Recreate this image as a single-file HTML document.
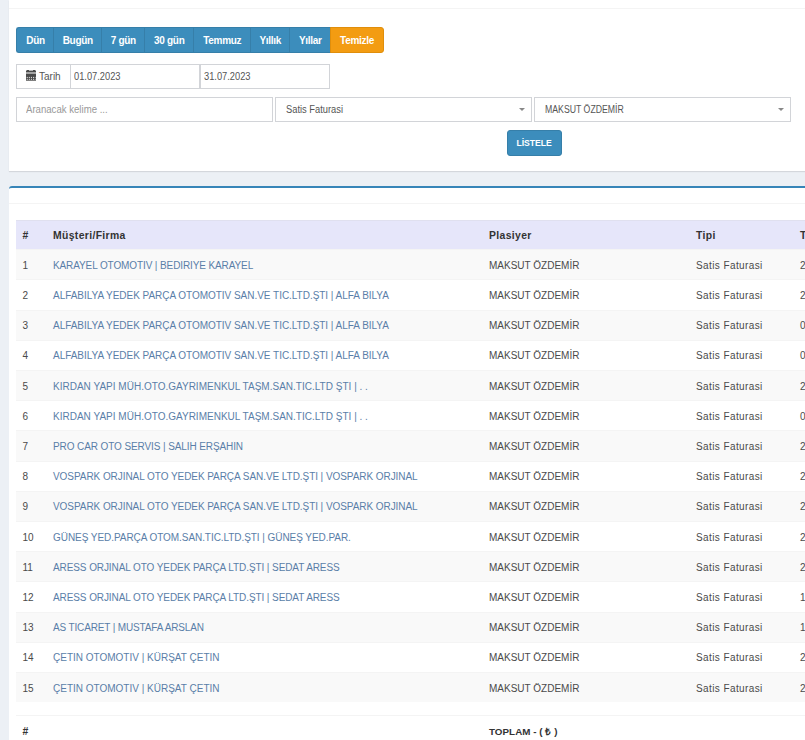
<!DOCTYPE html>
<html><head><meta charset="utf-8">
<style>
*{box-sizing:border-box;margin:0;padding:0}
html,body{width:805px;height:740px;overflow:hidden;background:#ecf0f5;font-family:"Liberation Sans",sans-serif;color:#333}
.abs{position:absolute}
.panel1{left:9px;top:0;width:800px;height:171px;background:#fff;box-shadow:0 1px 1px rgba(0,0,0,0.1)}
.panel1 .hline{left:0;top:8px;width:800px;height:1px;background:#f4f4f4}
.btng{top:27px;height:26px;left:16px}
.btn{position:absolute;top:27px;height:26px;background:#3c8dbc;color:#fff;font-weight:bold;font-size:10px;letter-spacing:-0.3px;line-height:25px;text-align:center;border:1px solid #367fa9;border-right:none}
.btn.first{border-radius:3px 0 0 3px}
.btn.warn{background:#f39c12;border:1px solid #e08e0b;border-radius:0 3px 3px 0}
.inp{position:absolute;background:#fff;border:1px solid #d2d4d8;font-size:10px;color:#555;line-height:23px;white-space:nowrap}
.sx{display:inline-block;transform-origin:0 50%}
.caret{position:absolute;width:0;height:0;border-left:3px solid transparent;border-right:3px solid transparent;border-top:3px solid #888}
.listele{left:507px;top:130px;width:55px;height:26px;background:#3c8dbc;border:1px solid #367fa9;border-radius:3px;color:#fff;font-weight:bold;font-size:9.8px;line-height:23.5px;text-align:center;white-space:nowrap}
.panel2{left:9px;top:186px;width:800px;height:600px;background:#fff;border-top:2px solid #3785b8;border-radius:3px 0 0 0}
.hline2{left:9px;top:203px;width:796px;height:1px;background:#f4f4f4}
.thead{left:16px;top:220px;width:800px;height:29px;background:#e6e6fa;border-top:1px solid #e0e0ef}
.th{position:absolute;font-weight:bold;font-size:10.4px;color:#333;top:227px;line-height:18px;letter-spacing:0.35px}
.row{position:absolute;left:16px;width:800px;height:30.2px;border-top:1px solid #f4f4f4}
.row.odd{background:#f9f9f9}
.td{position:absolute;font-size:10px;color:#4a4a4a;line-height:14px;white-space:nowrap}
.td a{color:#5a7ea8;text-decoration:none}
.td.sf{letter-spacing:0.4px}
</style></head><body>
<div class="abs panel1"><div class="abs hline"></div></div>

<div class="btn first" style="left:16px;width:38px">Dün</div>
<div class="btn" style="left:53px;width:48.5px">Bugün</div>
<div class="btn" style="left:101px;width:43.5px">7 gün</div>
<div class="btn" style="left:144px;width:49.5px">30 gün</div>
<div class="btn" style="left:193px;width:57.5px">Temmuz</div>
<div class="btn" style="left:250px;width:39.5px">Yıllık</div>
<div class="btn" style="left:289px;width:41.5px">Yıllar</div>
<div class="btn warn" style="left:330px;width:54px">Temizle</div>

<div class="inp" style="left:16px;top:64px;width:55px;height:25px;background:#fff"></div>
<div class="inp" style="left:70px;top:64px;width:130px;height:25px;padding-left:3px"><span class="sx" style="transform:scaleX(0.93)">01.07.2023</span></div>
<div class="inp" style="left:200px;top:64px;width:130px;height:25px;padding-left:3px"><span class="sx" style="transform:scaleX(0.93)">31.07.2023</span></div>
<svg class="abs" style="left:26px;top:70px" width="10" height="11" viewBox="0 0 10 11">
<g fill="#4a4a4a"><rect x="0.8" y="0" width="2.2" height="1.2"/><rect x="7" y="0" width="2.2" height="1.2"/>
<rect x="0" y="0.6" width="10" height="1.9"/><rect x="0" y="3.5" width="10" height="7.2"/></g>
<g fill="#fff" opacity="0.85"><rect x="0.7" y="6.9" width="1.1" height="1"/><rect x="2.8" y="6.9" width="1.1" height="1"/><rect x="4.9" y="6.9" width="1.1" height="1"/><rect x="7" y="6.9" width="1.1" height="1"/><rect x="8.9" y="6.9" width="0.6" height="1"/>
<rect x="0.7" y="8.8" width="1.1" height="1"/><rect x="2.8" y="8.8" width="1.1" height="1"/><rect x="4.9" y="8.8" width="1.1" height="1"/><rect x="7" y="8.8" width="1.1" height="1"/><rect x="8.9" y="8.8" width="0.6" height="1"/></g>
</svg>
<div class="abs" style="left:39px;top:70px;font-size:10px;color:#555;line-height:14px">Tarih</div>

<div class="inp" style="left:16px;top:97px;width:257px;height:25px;padding-left:9px;color:#999"><span class="sx" style="transform:scaleX(0.96)">Aranacak kelime ...</span></div>
<div class="inp" style="left:275px;top:97px;width:257px;height:25px;padding-left:10px"><span class="sx" style="transform:scaleX(0.933)">Satis Faturasi</span></div>
<div class="caret" style="left:519px;top:108px"></div>
<div class="inp" style="left:534px;top:97px;width:257px;height:25px;padding-left:10px"><span class="sx" style="transform:scaleX(0.872)">MAKSUT ÖZDEMİR</span></div>
<div class="caret" style="left:778px;top:108px"></div>

<div class="abs listele"><span style="display:inline-block;transform:scaleX(0.88)">LİSTELE</span></div>

<div class="abs panel2"></div>
<div class="abs hline2"></div>
<div class="abs thead"></div>
<div class="th" style="left:22.5px">#</div>
<div class="th" style="left:53px">Müşteri/Firma</div>
<div class="th" style="left:489px">Plasiyer</div>
<div class="th" style="left:696px">Tipi</div>
<div class="th" style="left:800px">T</div>

<div id="rows">
<div class="row odd" style="top:249.20px"></div>
<div class="td" style="left:22.5px;top:258.70px">1</div>
<div class="td" style="left:53px;top:258.70px;letter-spacing:-0.11px"><a>KARAYEL OTOMOTIV | BEDIRIYE KARAYEL</a></div>
<div class="td" style="left:489px;top:258.70px">MAKSUT ÖZDEMİR</div>
<div class="td sf" style="left:696px;top:258.70px">Satis Faturasi</div>
<div class="td" style="left:800px;top:258.70px">2</div>
<div class="row" style="top:279.40px"></div>
<div class="td" style="left:22.5px;top:288.90px">2</div>
<div class="td" style="left:53px;top:288.90px;letter-spacing:-0.03px"><a>ALFABILYA YEDEK PARÇA OTOMOTIV SAN.VE TIC.LTD.ŞTI | ALFA BILYA</a></div>
<div class="td" style="left:489px;top:288.90px">MAKSUT ÖZDEMİR</div>
<div class="td sf" style="left:696px;top:288.90px">Satis Faturasi</div>
<div class="td" style="left:800px;top:288.90px">2</div>
<div class="row odd" style="top:309.60px"></div>
<div class="td" style="left:22.5px;top:319.10px">3</div>
<div class="td" style="left:53px;top:319.10px;letter-spacing:-0.03px"><a>ALFABILYA YEDEK PARÇA OTOMOTIV SAN.VE TIC.LTD.ŞTI | ALFA BILYA</a></div>
<div class="td" style="left:489px;top:319.10px">MAKSUT ÖZDEMİR</div>
<div class="td sf" style="left:696px;top:319.10px">Satis Faturasi</div>
<div class="td" style="left:800px;top:319.10px">0</div>
<div class="row" style="top:339.80px"></div>
<div class="td" style="left:22.5px;top:349.30px">4</div>
<div class="td" style="left:53px;top:349.30px;letter-spacing:-0.03px"><a>ALFABILYA YEDEK PARÇA OTOMOTIV SAN.VE TIC.LTD.ŞTI | ALFA BILYA</a></div>
<div class="td" style="left:489px;top:349.30px">MAKSUT ÖZDEMİR</div>
<div class="td sf" style="left:696px;top:349.30px">Satis Faturasi</div>
<div class="td" style="left:800px;top:349.30px">0</div>
<div class="row odd" style="top:370.00px"></div>
<div class="td" style="left:22.5px;top:379.50px">5</div>
<div class="td" style="left:53px;top:379.50px;letter-spacing:0.01px"><a>KIRDAN YAPI MÜH.OTO.GAYRIMENKUL TAŞM.SAN.TIC.LTD ŞTI | . .</a></div>
<div class="td" style="left:489px;top:379.50px">MAKSUT ÖZDEMİR</div>
<div class="td sf" style="left:696px;top:379.50px">Satis Faturasi</div>
<div class="td" style="left:800px;top:379.50px">2</div>
<div class="row" style="top:400.20px"></div>
<div class="td" style="left:22.5px;top:409.70px">6</div>
<div class="td" style="left:53px;top:409.70px;letter-spacing:0.01px"><a>KIRDAN YAPI MÜH.OTO.GAYRIMENKUL TAŞM.SAN.TIC.LTD ŞTI | . .</a></div>
<div class="td" style="left:489px;top:409.70px">MAKSUT ÖZDEMİR</div>
<div class="td sf" style="left:696px;top:409.70px">Satis Faturasi</div>
<div class="td" style="left:800px;top:409.70px">0</div>
<div class="row odd" style="top:430.40px"></div>
<div class="td" style="left:22.5px;top:439.90px">7</div>
<div class="td" style="left:53px;top:439.90px;letter-spacing:-0.1px"><a>PRO CAR OTO SERVIS | SALIH ERŞAHIN</a></div>
<div class="td" style="left:489px;top:439.90px">MAKSUT ÖZDEMİR</div>
<div class="td sf" style="left:696px;top:439.90px">Satis Faturasi</div>
<div class="td" style="left:800px;top:439.90px">2</div>
<div class="row" style="top:460.60px"></div>
<div class="td" style="left:22.5px;top:470.10px">8</div>
<div class="td" style="left:53px;top:470.10px;letter-spacing:-0.06px"><a>VOSPARK ORJINAL OTO YEDEK PARÇA SAN.VE LTD.ŞTI | VOSPARK ORJINAL</a></div>
<div class="td" style="left:489px;top:470.10px">MAKSUT ÖZDEMİR</div>
<div class="td sf" style="left:696px;top:470.10px">Satis Faturasi</div>
<div class="td" style="left:800px;top:470.10px">2</div>
<div class="row odd" style="top:490.80px"></div>
<div class="td" style="left:22.5px;top:500.30px">9</div>
<div class="td" style="left:53px;top:500.30px;letter-spacing:-0.06px"><a>VOSPARK ORJINAL OTO YEDEK PARÇA SAN.VE LTD.ŞTI | VOSPARK ORJINAL</a></div>
<div class="td" style="left:489px;top:500.30px">MAKSUT ÖZDEMİR</div>
<div class="td sf" style="left:696px;top:500.30px">Satis Faturasi</div>
<div class="td" style="left:800px;top:500.30px">2</div>
<div class="row" style="top:521.00px"></div>
<div class="td" style="left:22.5px;top:530.50px">10</div>
<div class="td" style="left:53px;top:530.50px;letter-spacing:-0.06px"><a>GÜNEŞ YED.PARÇA OTOM.SAN.TIC.LTD.ŞTI | GÜNEŞ YED.PAR.</a></div>
<div class="td" style="left:489px;top:530.50px">MAKSUT ÖZDEMİR</div>
<div class="td sf" style="left:696px;top:530.50px">Satis Faturasi</div>
<div class="td" style="left:800px;top:530.50px">2</div>
<div class="row odd" style="top:551.20px"></div>
<div class="td" style="left:22.5px;top:560.70px">11</div>
<div class="td" style="left:53px;top:560.70px;letter-spacing:-0.09px"><a>ARESS ORJINAL OTO YEDEK PARÇA LTD.ŞTI | SEDAT ARESS</a></div>
<div class="td" style="left:489px;top:560.70px">MAKSUT ÖZDEMİR</div>
<div class="td sf" style="left:696px;top:560.70px">Satis Faturasi</div>
<div class="td" style="left:800px;top:560.70px">2</div>
<div class="row" style="top:581.40px"></div>
<div class="td" style="left:22.5px;top:590.90px">12</div>
<div class="td" style="left:53px;top:590.90px;letter-spacing:-0.09px"><a>ARESS ORJINAL OTO YEDEK PARÇA LTD.ŞTI | SEDAT ARESS</a></div>
<div class="td" style="left:489px;top:590.90px">MAKSUT ÖZDEMİR</div>
<div class="td sf" style="left:696px;top:590.90px">Satis Faturasi</div>
<div class="td" style="left:800px;top:590.90px">1</div>
<div class="row odd" style="top:611.60px"></div>
<div class="td" style="left:22.5px;top:621.10px">13</div>
<div class="td" style="left:53px;top:621.10px;letter-spacing:-0.15px"><a>AS TICARET | MUSTAFA ARSLAN</a></div>
<div class="td" style="left:489px;top:621.10px">MAKSUT ÖZDEMİR</div>
<div class="td sf" style="left:696px;top:621.10px">Satis Faturasi</div>
<div class="td" style="left:800px;top:621.10px">1</div>
<div class="row" style="top:641.80px"></div>
<div class="td" style="left:22.5px;top:651.30px">14</div>
<div class="td" style="left:53px;top:651.30px;letter-spacing:0px"><a>ÇETIN OTOMOTIV | KÜRŞAT ÇETIN</a></div>
<div class="td" style="left:489px;top:651.30px">MAKSUT ÖZDEMİR</div>
<div class="td sf" style="left:696px;top:651.30px">Satis Faturasi</div>
<div class="td" style="left:800px;top:651.30px">2</div>
<div class="row odd" style="top:672.00px"></div>
<div class="td" style="left:22.5px;top:681.50px">15</div>
<div class="td" style="left:53px;top:681.50px;letter-spacing:0px"><a>ÇETIN OTOMOTIV | KÜRŞAT ÇETIN</a></div>
<div class="td" style="left:489px;top:681.50px">MAKSUT ÖZDEMİR</div>
<div class="td sf" style="left:696px;top:681.50px">Satis Faturasi</div>
<div class="td" style="left:800px;top:681.50px">2</div>
</div><!--/rows-->

<div class="abs" style="left:16px;top:715px;width:800px;height:1px;background:#f4f4f4"></div>
<div class="th" style="left:22.5px;top:723px">#</div>
<div class="th" style="left:489px;top:723px;font-size:9.8px;letter-spacing:0.05px">TOPLAM - ( ₺ )</div>
</body></html>
